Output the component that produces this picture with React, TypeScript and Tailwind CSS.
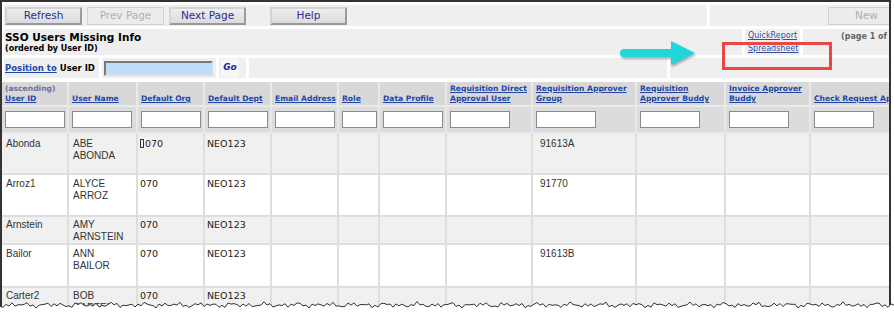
import React from "react";

const COLS =
  "grid grid-cols-[67px_69px_67px_67px_67px_41px_67px_86px_104px_89px_85px_140px]";

const headers = [
  { sub: "(ascending)", label: ["User ID"] },
  { label: ["User Name"] },
  { label: ["Default Org"] },
  { label: ["Default Dept"] },
  { label: ["Email Address"] },
  { label: ["Role"] },
  { label: ["Data Profile"] },
  { label: ["Requisition Direct", "Approval User"] },
  { label: ["Requisition Approver", "Group"] },
  { label: ["Requisition", "Approver Buddy"] },
  { label: ["Invoice Approver", "Buddy"] },
  { label: ["Check Request Approver"] },
];

const rows = [
  { id: "Abonda", name: ["ABE", "ABONDA"], grp: "91613A", mark: true, h: "h-[41px]", bg: "bg-[#f0f0f0]", pt: "pt-[4px]" },
  { id: "Arroz1", name: ["ALYCE", "ARROZ"], grp: "91770", mark: false, h: "h-[42px]", bg: "bg-white", pt: "pt-[3px]" },
  { id: "Arnstein", name: ["AMY", "ARNSTEIN"], grp: "", mark: false, h: "h-[28px]", bg: "bg-[#f0f0f0]", pt: "pt-[2px]" },
  { id: "Bailor", name: ["ANN", "BAILOR"], grp: "91613B", mark: false, h: "h-[43px]", bg: "bg-white", pt: "pt-[3px]" },
  { id: "Carter2", name: ["BOB", "CARTER"], grp: "", mark: false, h: "h-[40px]", bg: "bg-[#f0f0f0]", pt: "pt-[2px]" },
];

function ToolButton({ label, disabled }: { label: string; disabled?: boolean }) {
  return (
    <button
      className={
        disabled
          ? "flex h-[18px] w-[77px] shrink-0 items-center justify-center border border-[#d2d2d2] bg-[#ececec] text-[10.5px] text-[#b0b0b0]"
          : "flex h-[18px] w-[77px] shrink-0 items-center justify-center border-2 border-t-[#d4d4d4] border-l-[#d4d4d4] border-r-[#9a9a9a] border-b-[#9a9a9a] bg-gradient-to-b from-[#eeeeee] to-[#dcdcdc] text-[10.5px] text-[#2c2c94]"
      }
    >
      {label}
    </button>
  );
}

function tornPath() {
  const pts: string[] = [];
  for (let x = 0; x <= 894; x += 3) {
    const y =
      9 +
      1.5 * Math.sin(x * 0.9) +
      1.1 * Math.sin(x * 0.37 + 1) +
      0.8 * Math.sin(x * 2.3 + 0.5);
    pts.push(`${x},${y.toFixed(1)}`);
  }
  return pts;
}

export default function App() {
  const pts = tornPath();

  return (
    <div className="relative h-[315px] w-[894px] overflow-hidden bg-white font-['DejaVu_Sans',sans-serif]">
      <div className="h-[315px] w-[891px] overflow-hidden border-x-2 border-t-2 border-[#333]">
        {/* toolbar */}
        <div className="mt-[3px] flex h-[21px] gap-[3px] pl-[2px]">
          <div className="flex w-[703px] shrink-0 items-center bg-[#efefef] pl-px">
            <div className="flex gap-[5px]">
              <ToolButton label="Refresh" />
              <ToolButton label="Prev Page" disabled />
              <ToolButton label="Next Page" />
            </div>
            <div className="ml-[24px]">
              <ToolButton label="Help" />
            </div>
          </div>
          <div className="flex w-[300px] shrink-0 items-center bg-[#efefef] pl-[118px]">
            <ToolButton label="New" disabled />
          </div>
        </div>

        {/* title */}
        <div className="mt-[3px] flex h-[26px] gap-[3px] pl-[2px]">
          <div className="flex w-[738px] shrink-0 flex-col justify-center bg-[#efefef] pl-px">
            <div className="text-[10.5px] leading-[13px] font-bold text-black">SSO Users Missing Info</div>
            <div className="text-[8px] leading-[10px] font-bold text-black">(ordered by User ID)</div>
          </div>
          <div className="flex w-[55px] shrink-0 flex-col justify-center bg-[#efefef] pl-[3px] text-[8px] leading-[13px] text-[#2f4fa8]">
            <a className="underline">QuickReport</a>
            <a className="underline">Spreadsheet</a>
          </div>
          <div className="w-[200px] shrink-0 bg-[#efefef] pt-[2px] pl-[38px] text-[8px] leading-[12px] font-bold whitespace-nowrap text-[#666]">
            (page 1 of 1)
          </div>
        </div>

        {/* position to */}
        <div className="mt-[3px] flex h-[20px] gap-[3px] pl-[2px]">
          <div className="flex w-[95px] shrink-0 items-center gap-[3px] bg-[#efefef] pl-px text-[8.5px] font-bold whitespace-nowrap">
            <a className="text-[#1f46a6] underline">Position to</a>
            <span className="text-black">User ID</span>
          </div>
          <div className="flex w-[114px] shrink-0 items-center bg-[#efefef] pl-[2px]">
            <input className="h-[15px] w-[109px] border-2 border-t-[#777] border-l-[#777] border-r-[#cfdff0] border-b-[#cfdff0] bg-[#bfdcf8] outline-none" />
          </div>
          <div className="flex w-[27px] shrink-0 items-center bg-[#efefef] pl-[2px]">
            <span className="flex h-[18px] w-[18px] items-center justify-center bg-[#f7f7f7] text-[9px] font-bold text-[#2424a0] italic">
              Go
            </span>
          </div>
          <div className="w-[418px] shrink-0 bg-[#efefef]" />
          <div className="w-[230px] shrink-0 bg-[#efefef]" />
        </div>

        {/* table */}
        <div className="mt-[4px] w-[949px]">
          <div className={`${COLS} h-[25px] bg-[#d8d8d8]`}>
            {headers.map((h, i) => (
              <div
                key={i}
                className="flex flex-col justify-end border-r-2 border-b-2 border-[#e9e9e9] pb-px pl-[3px] text-[7.6px] leading-[10px] font-bold whitespace-nowrap"
              >
                {h.sub && <span className="text-[#6e6e9e]">{h.sub}</span>}
                {h.label.map((l) => (
                  <span key={l} className="text-[#1f46a6] underline">
                    {l}
                  </span>
                ))}
              </div>
            ))}
          </div>
          <div className={`${COLS} h-[27px] bg-[#dcdcdc]`}>
            {headers.map((_, i) => (
              <div key={i} className="flex items-center border-r-2 border-b-2 border-[#e9e9e9] pl-[3px]">
                <input
                  className={`${i === 5 ? "w-[35px]" : "w-[60px]"} h-[17px] border border-[#8a8a8a] bg-white outline-none`}
                />
              </div>
            ))}
          </div>
          {rows.map((r) => (
            <div key={r.id} className={`${COLS} ${r.h} ${r.bg} text-[10px] leading-[12px] text-[#333]`}>
              <div className={`border-r-2 border-b-2 border-[#dedede] pl-[4px] font-['Liberation_Sans',sans-serif] ${r.pt}`}>
                {r.id}
              </div>
              <div className={`border-r-2 border-b-2 border-[#dedede] pl-[4px] font-['Liberation_Sans',sans-serif] ${r.pt}`}>
                <div>{r.name[0]}</div>
                <div>{r.name[1]}</div>
              </div>
              <div className={`border-r-2 border-b-2 border-[#dedede] pl-[2px] text-[9.5px] text-[#222] ${r.pt}`}>
                {r.mark && <span className="mr-px inline-block h-[9px] w-[4px] border border-[#333] align-[-1px]" />}
                070
              </div>
              <div className={`border-r-2 border-b-2 border-[#dedede] pl-[2px] text-[9.5px] text-[#222] ${r.pt}`}>NEO123</div>
              <div className="border-r-2 border-b-2 border-[#dedede]" />
              <div className="border-r-2 border-b-2 border-[#dedede]" />
              <div className="border-r-2 border-b-2 border-[#dedede]" />
              <div className="border-r-2 border-b-2 border-[#dedede]" />
              <div className={`border-r-2 border-b-2 border-[#dedede] pl-[7px] font-['Liberation_Sans',sans-serif] ${r.pt}`}>
                {r.grp}
              </div>
              <div className="border-r-2 border-b-2 border-[#dedede]" />
              <div className="border-r-2 border-b-2 border-[#dedede]" />
              <div className="border-r-2 border-b-2 border-[#dedede]" />
            </div>
          ))}
        </div>
      </div>

      {/* callout arrow */}
      <svg className="absolute top-[38px] left-[616px] drop-shadow-[1px_2px_1px_rgba(0,0,0,0.3)]" width="84" height="30" viewBox="0 0 84 30">
        <rect x="4" y="11" width="56" height="8" rx="4" fill="#1fd6d8" />
        <polygon points="55,3 79,15 55,27" fill="#1fd6d8" />
      </svg>

      {/* highlight box */}
      <div className="absolute top-[42px] left-[722px] h-[28px] w-[110px] border-[3px] border-[#ea4646]" />

      {/* torn edge */}
      <svg className="absolute top-[296px] left-0" width="894" height="19" viewBox="0 0 894 19">
        <polygon points={`0,19 ${pts.join(" ")} 894,19`} fill="#ffffff" />
        <polyline points={pts.join(" ")} fill="none" stroke="#333" strokeWidth="1" />
      </svg>
    </div>
  );
}
